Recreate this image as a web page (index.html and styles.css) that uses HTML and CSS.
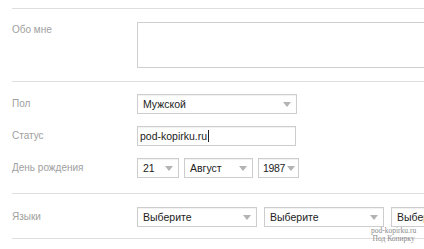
FILE: index.html
```html
<!DOCTYPE html>
<html lang="ru">
<head>
    <meta charset="UTF-8">
    <title>Профиль</title>
    <link rel="stylesheet" href="styles.css">
</head>
<body>
    <div class="profile">
        <div class="section about-section">
            <div class="row">
                <div class="label label-top">Обо мне</div>
                <textarea class="about"></textarea>
            </div>
        </div>

        <div class="section main-section">
            <div class="row">
                <div class="label">Пол</div>
                <div class="select w-gender"><span>Мужской</span><i class="arrow"></i></div>
            </div>
            <div class="row">
                <div class="label">Статус</div>
                <div class="input w-status">pod-kopirku.ru<span class="caret"></span></div>
            </div>
            <div class="row">
                <div class="label">День рождения</div>
                <div class="controls">
                    <div class="select w-day"><span>21</span><i class="arrow"></i></div>
                    <div class="select w-month"><span>Август</span><i class="arrow"></i></div>
                    <div class="select w-year"><span>1987</span><i class="arrow"></i></div>
                </div>
            </div>
        </div>

        <div class="section lang-section">
            <div class="row">
                <div class="label">Языки</div>
                <div class="controls langs">
                    <div class="select w-lang"><span>Выберите</span><i class="arrow"></i></div>
                    <div class="select w-lang"><span>Выберите</span><i class="arrow"></i></div>
                    <div class="select w-lang"><span>Выберите</span><i class="arrow"></i></div>
                </div>
            </div>
        </div>
        <div class="section"></div>
    </div>

    <div class="watermark">
        <div>pod-kopirku.ru</div>
        <div>Под Копирку</div>
    </div>
</body>
</html>
```

FILE: styles.css
```css
body {
    margin: 0;
    font-family: 'Liberation Sans', Arial, sans-serif;
    background: #ffffff;
    color: #222;
    overflow: hidden;
}
.profile {
    padding-top: 8px;
    margin-left: 12px;
    width: 640px;
}
.section {
    border-top: 1px solid #dedede;
}
.about-section {
    padding: 13px 0 13px;
}
.main-section {
    padding: 12px 0 15px;
}
.lang-section {
    padding: 13px 0 11px;
}
.row {
    display: grid;
    grid-template-columns: 125px auto;
    align-items: start;
}
.row + .row {
    margin-top: 12px;
}
.label {
    font-size: 10px;
    line-height: 20px;
    color: #a0a0a0;
}
.label-top {
    line-height: 16px;
}
.about {
    display: block;
    width: 320px;
    height: 46px;
    box-sizing: border-box;
    border: 1px solid #cfcfcf;
    resize: none;
    margin: 0;
}
.controls {
    display: flex;
    gap: 5px;
}
.langs {
    gap: 7px;
}
.select, .input {
    box-sizing: border-box;
    height: 20px;
    border: 1px solid #cdcdcd;
    box-shadow: inset 0 1px 1px rgba(0, 0, 0, 0.06);
    font-size: 10.5px;
    color: #222;
    display: flex;
    align-items: center;
    padding: 0 5px;
    flex-shrink: 0;
    background: #fff;
}
.select {
    justify-content: space-between;
}
.input {
    padding: 0 2px;
}
.caret {
    display: inline-block;
    width: 1px;
    height: 12px;
    background: #222;
    margin-left: 1px;
}
.arrow {
    width: 0;
    height: 0;
    border-left: 4px solid transparent;
    border-right: 4px solid transparent;
    border-top: 5px solid #b3b3b3;
}
.w-gender { width: 160px; }
.w-status { width: 159px; }
.w-day { width: 42px; }
.w-month { width: 69px; }
.w-year { width: 41px; padding: 0 3px 0 4px; }
.w-year span { letter-spacing: -0.3px; }
.w-lang { width: 120px; }
.watermark {
    position: absolute;
    left: 371px;
    top: 227px;
    font-family: 'Liberation Serif', 'Times New Roman', serif;
    font-size: 7.5px;
    line-height: 7.5px;
    color: #8a8a8a;
    text-align: center;
}
```
